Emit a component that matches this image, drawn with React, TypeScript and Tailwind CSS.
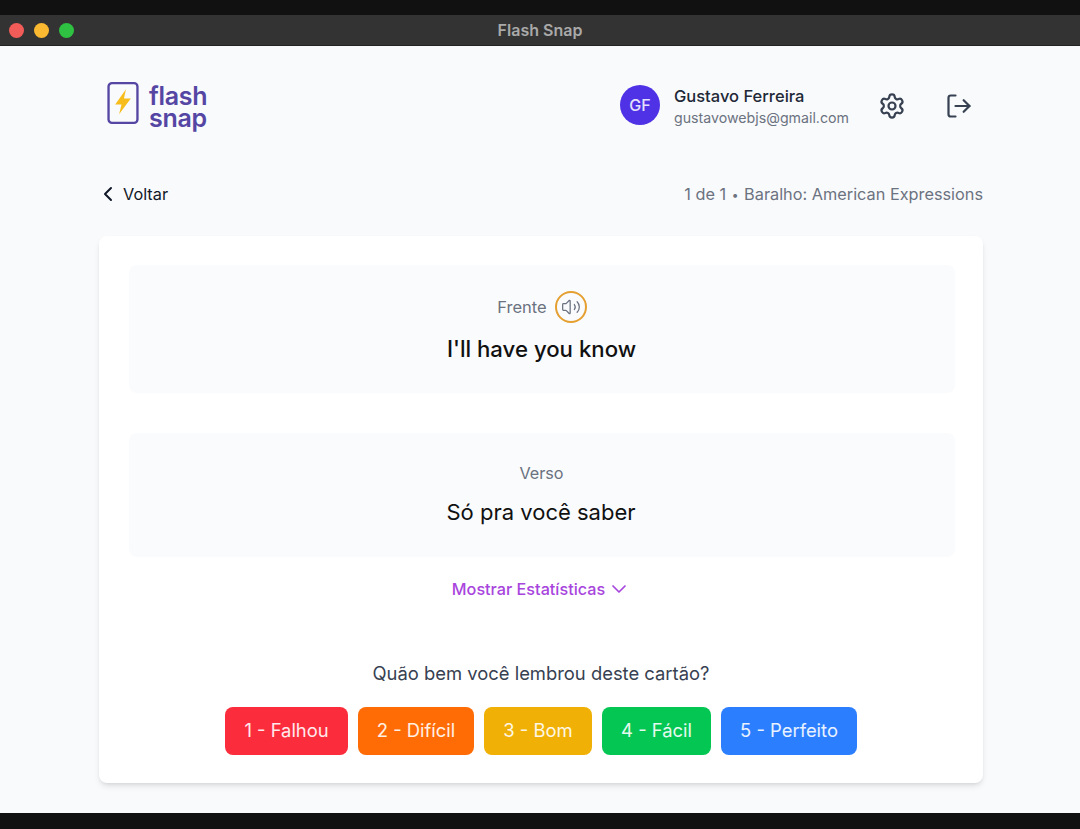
import React from 'react';
import { ChevronDown, ChevronLeft, LogOut, Settings, Volume2 } from 'lucide-react';

const ratings = [
  { label: '1 - Falhou', width: 'w-[123px]', color: 'bg-[#fb2c3c]' },
  { label: '2 - Difícil', width: 'w-[116px]', color: 'bg-[#ff6c05]' },
  { label: '3 - Bom', width: 'w-[108px]', color: 'bg-[#f0b005]' },
  { label: '4 - Fácil', width: 'w-[109px]', color: 'bg-[#04c653]' },
  { label: '5 - Perfeito', width: 'w-[136px]', color: 'bg-[#2b7fff]' },
];

const Logo = () => (
  <div className="flex items-start gap-[10px] mb-[2px]">
    <svg width="32" height="42" viewBox="0 0 32 43" fill="none">
      <rect x="1.2" y="1.2" width="29.6" height="40.6" rx="3.5" stroke="#5546a4" strokeWidth="2.4" />
      <path d="M19 7.5 L8 23 H14.5 L12 33 L24 17 H17 Z" fill="#f7bd1d" />
    </svg>
    <div className="flex flex-col pt-[3px] text-[25px] leading-[22px] font-semibold text-[#5546a4] tracking-[-0.3px]">
      <span>flash</span>
      <span>snap</span>
    </div>
  </div>
);

export default function App() {
  return (
    <div className="h-[829px] flex flex-col bg-[#111111] font-['Inter',sans-serif] overflow-hidden">
      <div className="h-[15px] shrink-0" />

      {/* Title bar */}
      <div className="relative h-[31px] shrink-0 bg-[#333333] border-b border-[#222222] flex items-center pl-[9px] gap-[10px]">
        <span className="w-[15px] h-[15px] rounded-full bg-[#f25c58]" />
        <span className="w-[15px] h-[15px] rounded-full bg-[#fbb831]" />
        <span className="w-[15px] h-[15px] rounded-full bg-[#2fc142]" />
        <span className="absolute inset-0 flex items-center justify-center text-[16px] font-semibold text-[#a9a9a9]">
          Flash Snap
        </span>
      </div>

      {/* Page */}
      <div className="h-[767px] shrink-0 bg-[#f9fafc] pl-[99px] pr-[97px]">
        <header className="h-[120px] flex items-center justify-between pl-[8px] pr-[10px] pt-[1px]">
          <Logo />
          <div className="flex items-center">
            <div className="w-[40px] h-[40px] mb-[4px] rounded-full bg-[#4f32e6] flex items-center justify-center text-[16px] font-medium text-[#e4e0fb]">
              GF
            </div>
            <div className="ml-[14px] flex flex-col">
              <span className="text-[16.5px] leading-[22px] font-medium text-[#1f2937]">Gustavo Ferreira</span>
              <span className="text-[14.2px] leading-[22px] text-[#6b7280]">gustavowebjs@gmail.com</span>
            </div>
            <Settings className="ml-[29px] mb-[2px] text-[#374151]" size={28} strokeWidth={1.9} />
            <LogOut className="ml-[39px] mb-[2px] text-[#374151]" size={28} strokeWidth={1.9} />
          </div>
        </header>

        <div className="h-[70px] flex items-start justify-between pt-[16px]">
          <div className="flex items-center text-[#111827]">
            <ChevronLeft className="-ml-[3px]" size={24} strokeWidth={2} />
            <span className="ml-[3px] text-[16.3px] leading-[24px]">Voltar</span>
          </div>
          <span className="text-[16.3px] leading-[24px] text-[#6b7280]">
            1 de 1 <span className="text-[12px] px-[1px] align-[1px]">•</span> Baralho: American Expressions
          </span>
        </div>

        {/* Card */}
        <div className="h-[547px] w-[884px] bg-white rounded-lg shadow-md px-[30px] pt-[29px] flex flex-col">
          <div className="w-[826px] h-[128px] rounded-lg bg-[#fafbfd] flex flex-col items-center pt-[26px]">
            <div className="h-[32px] flex items-center">
              <span className="text-[16.5px] text-[#6b7280]">Frente</span>
              <span className="ml-[8px] w-[32px] h-[32px] rounded-full border-2 border-[#e5a032] flex items-center justify-center text-[#6b7280]">
                <Volume2 size={20} strokeWidth={1.5} />
              </span>
            </div>
            <p className="mt-[10px] pr-[1px] text-[22.2px] leading-[32px] font-medium text-[#111111]">I'll have you know</p>
          </div>

          <div className="mt-[40px] w-[826px] h-[124px] rounded-lg bg-[#fafbfd] flex flex-col items-center pt-[28px]">
            <span className="pr-[1px] text-[16.2px] leading-[24px] text-[#6b7280]">Verso</span>
            <p className="mt-[11px] pr-[2px] text-[22px] leading-[32px] text-[#111111]">Só pra você saber</p>
          </div>

          <div className="mt-[20px] pl-[1px] flex items-center justify-center text-[#a845dd]">
            <span className="text-[16.2px] leading-[24px] font-medium">Mostrar Estatísticas</span>
            <ChevronDown className="ml-[2px]" size={24} strokeWidth={1.7} />
          </div>

          <p className="mt-[58px] text-center text-[18.4px] leading-[28px] text-[#374151]">
            Quão bem você lembrou deste cartão?
          </p>

          <div className="mt-[20px] flex justify-center gap-[10px]">
            {ratings.map((r) => (
              <button
                key={r.label}
                className={`${r.width} ${r.color} h-[48px] rounded-lg text-[18.4px] text-white/90 flex items-center justify-center`}
              >
                {r.label}
              </button>
            ))}
          </div>
        </div>
      </div>
    </div>
  );
}
